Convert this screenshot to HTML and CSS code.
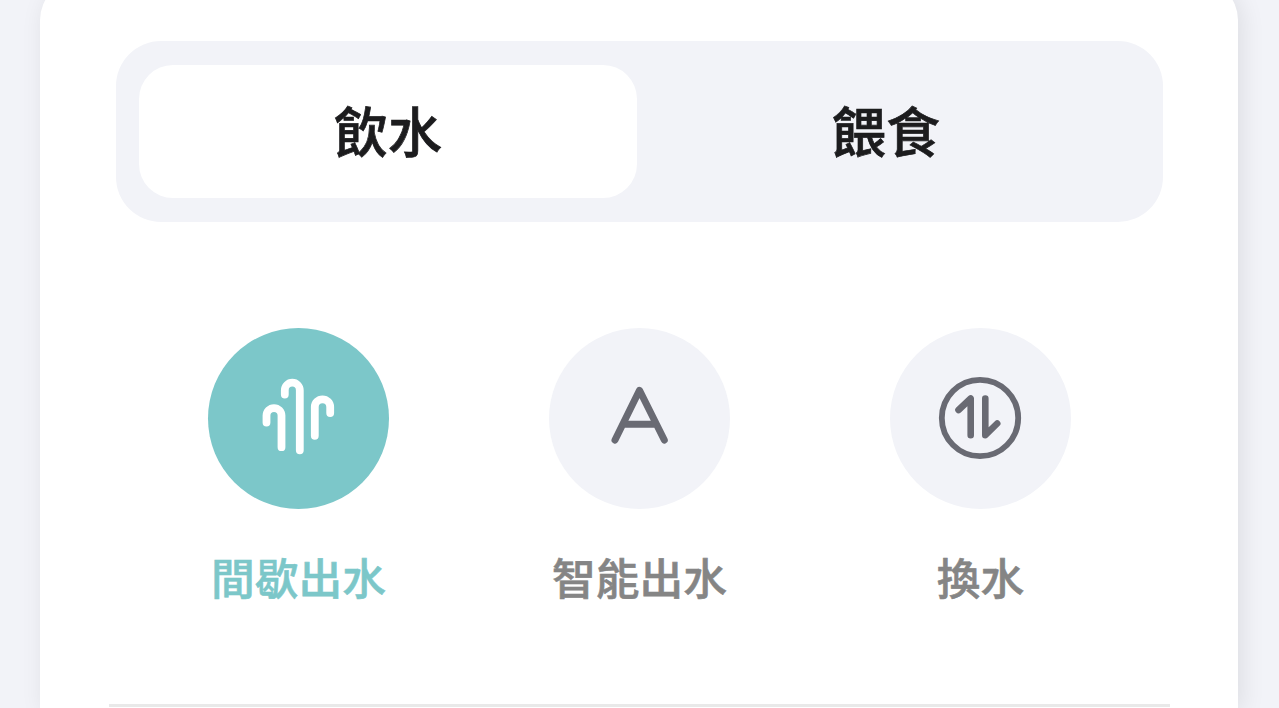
FILE: index.html
```html
<!DOCTYPE html>
<html lang="zh-Hant">
<head>
<meta charset="utf-8">
<title>飲水</title>
<link rel="stylesheet" href="styles.css">
</head>
<body>

<div class="card">
	<div class="tabs">
		<div class="tab active">飲水</div>
		<div class="tab">餵食</div>
	</div>

	<div class="modes">
		<div class="mode active">
			<div class="icon">
				<svg viewBox="0 0 181 181" stroke-width="7.8">
					<path d="M58.5 94.5V87.6a7.5 7.5 0 0 1 15 0V119.2"/>
					<path d="M76.8 66.5V62.2a7.5 7.5 0 0 1 15 0V122.3"/>
					<path d="M106.8 107.8V79a7.7 7.7 0 0 1 15.4 0V85"/>
				</svg>
			</div>
			<div class="label">間歇出水</div>
		</div>
		<div class="mode">
			<div class="icon">
				<svg viewBox="0 0 181 181" stroke-width="7">
					<path d="M66 112L90.5 62.3L115.3 112M74.5 96.3H106.5"/>
				</svg>
			</div>
			<div class="label">智能出水</div>
		</div>
		<div class="mode">
			<div class="icon">
				<svg viewBox="0 0 181 181" stroke-width="6.6">
					<circle cx="90" cy="90" r="38.2" stroke-width="5.8"/>
					<path d="M68.5 82L80.7 70.5V107.2"/>
					<path d="M95.3 70.5V107.2L107.2 95.5"/>
				</svg>
			</div>
			<div class="label">換水</div>
		</div>
	</div>

	<div class="divider"></div>
</div>

</body>
</html>
```

FILE: styles.css
```css
body {
	margin: 0;
	height: 708px;
	overflow: hidden;
	display: flex;
	background: #f2f3f8;
	font-family: "Noto Sans CJK TC", sans-serif;
	font-weight: 500;
}

.card {
	box-sizing: border-box;
	width: 1198px;
	height: 728px;
	margin: -20px 0 0 40px;
	padding: 61px 68px 0 69px;
	flex: none;
	border-radius: 40px 40px 0 0;
	background: #fff;
	box-shadow: 4px 4px 24px rgba(0, 0, 0, 0.09);
}

.tabs {
	box-sizing: border-box;
	display: flex;
	width: 1047px;
	height: 181px;
	margin: 0 7px;
	padding: 24px 28px 24px 23px;
	border-radius: 45px;
	background: #f2f3f8;
}
.tab {
	flex: 1;
	border-radius: 34px;
	line-height: 130px;
	font-size: 54px;
	text-align: center;
	color: #1c1c1e;
	-webkit-text-stroke: 0.7px;
}
.tab.active {
	background: #fff;
}

.modes {
	display: flex;
	width: 1023px;
	margin: 106px 0 0 19px;
}
.mode {
	flex: 1;
	display: flex;
	flex-direction: column;
	align-items: center;
}
.icon {
	width: 181px;
	height: 181px;
	border-radius: 50%;
	background: #f2f3f8;
}
.icon svg {
	display: block;
	fill: none;
	stroke: #696a73;
	stroke-linecap: round;
	stroke-linejoin: round;
}
.label {
	margin-top: 35px;
	line-height: 64px;
	font-size: 43.7px;
	color: #858585;
	-webkit-text-stroke: 0.6px;
}
.mode.active .icon {
	background: #7cc7c9;
}
.mode.active svg {
	stroke: #fff;
}
.mode.active .label {
	color: #7cc7c9;
}

.divider {
	height: 3px;
	margin-top: 96px;
	background: #e9e9e9;
}
```
